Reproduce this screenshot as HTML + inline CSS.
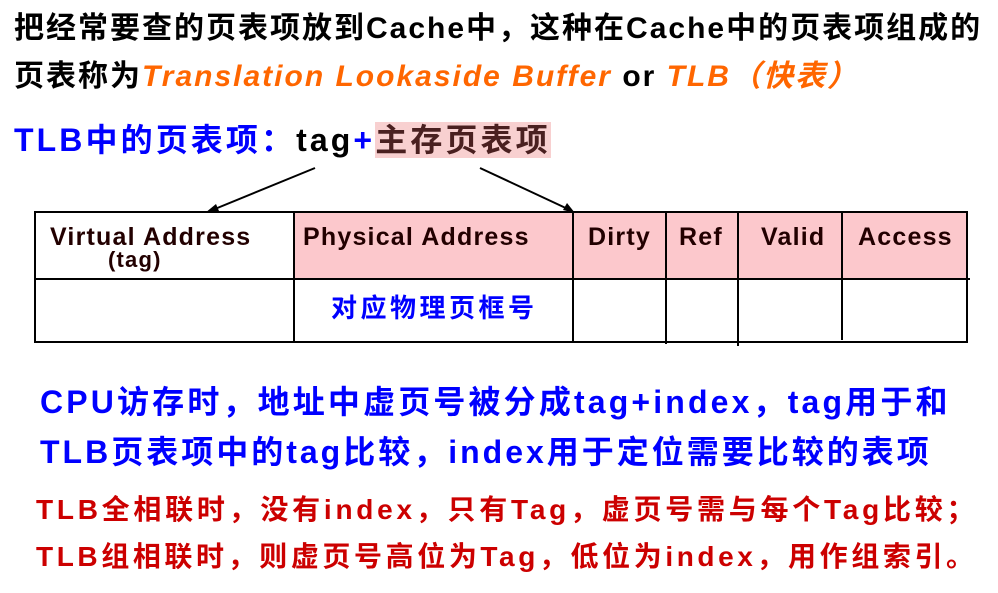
<!DOCTYPE html>
<html><head><meta charset="utf-8"><style>
body{margin:0;width:998px;height:593px;background:#fff;position:relative;overflow:hidden;font-family:"Liberation Sans","Noto Sans CJK SC",sans-serif;font-weight:bold}
.t{position:absolute;white-space:nowrap;line-height:1}
.o{color:#ff6600;font-style:italic}
.cell{position:absolute;font-size:25px;color:#200;line-height:1;letter-spacing:1.2px;white-space:nowrap}
</style></head><body>
<div class="t" style="left:14px;top:14px;font-size:30px;color:#000;letter-spacing:2px">把经常要查的页表项放到Cache中，这种在Cache中的页表项组成的</div>
<div class="t" style="left:14px;top:62px;font-size:30px;color:#000;letter-spacing:2px">页表称为<span class="o">Translation Lookaside Buffer</span> or <span class="o">TLB（快表）</span></div>
<div class="t" style="left:14px;top:124px;font-size:32px;color:#0000ff;letter-spacing:3.1px">TLB中的页表项：<span style="color:#000">tag</span>+<span style="color:#4a2020;background:#f8d0d0">主存页表项</span></div>
<svg style="position:absolute;left:0;top:0" width="998" height="593">
<rect x="294" y="212" width="673" height="67" fill="#fcc8cc"/>
<g stroke="#000" stroke-width="2" fill="none">
<rect x="35" y="212" width="932" height="130"/>
<line x1="35" y1="279" x2="970" y2="279"/>
<line x1="294" y1="212" x2="294" y2="341"/>
<line x1="573" y1="212" x2="573" y2="342"/>
<line x1="666" y1="212" x2="666" y2="344"/>
<line x1="738" y1="212" x2="738" y2="346"/>
<line x1="842" y1="212" x2="842" y2="340"/>
<line x1="315" y1="168" x2="210" y2="211"/>
<line x1="480" y1="168" x2="570" y2="210"/>
</g>
<polygon points="205,213 216,204 219,211" fill="#000"/>
<polygon points="575,213 563,210 567,203" fill="#000"/>
</svg>
<div class="cell" style="left:50px;top:225px">Virtual Address</div>
<div class="cell" style="left:108px;top:249px;font-size:22px">(tag)</div>
<div class="cell" style="left:303px;top:225px">Physical Address</div>
<div class="cell" style="left:588px;top:225px">Dirty</div>
<div class="cell" style="left:679px;top:225px">Ref</div>
<div class="cell" style="left:761px;top:225px">Valid</div>
<div class="cell" style="left:858px;top:225px">Access</div>
<div class="t" style="left:331px;top:295px;font-size:26px;color:#0000ff;letter-spacing:3.5px">对应物理页框号</div>
<div class="t" style="left:40px;top:386px;font-size:32px;color:#0000ff;letter-spacing:3.15px">CPU访存时，地址中虚页号被分成tag+index，tag用于和</div>
<div class="t" style="left:40px;top:436px;font-size:32px;color:#0000ff;letter-spacing:3px">TLB页表项中的tag比较，index用于定位需要比较的表项</div>
<div class="t" style="left:36px;top:496px;font-size:28px;color:#cc0000;letter-spacing:3.75px">TLB全相联时，没有index，只有Tag，虚页号需与每个Tag比较；</div>
<div class="t" style="left:36px;top:543px;font-size:28px;color:#cc0000;letter-spacing:3.6px">TLB组相联时，则虚页号高位为Tag，低位为index，用作组索引。</div>
</body></html>
